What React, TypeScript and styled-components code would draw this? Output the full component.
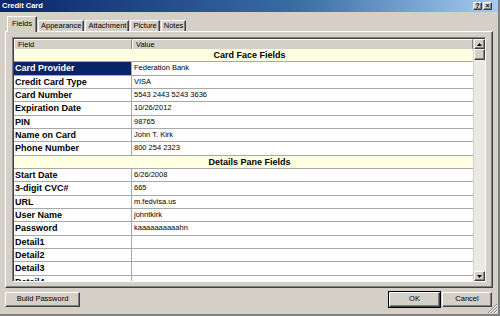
import React from "react";
import styled, { createGlobalStyle, css } from "styled-components";

const Global = createGlobalStyle`
  html, body { margin: 0; padding: 0; background: #d4d0c8; }
  body { font-family: "Liberation Sans", Arial, sans-serif; }
  * { box-sizing: border-box; }
`;

const ROW_H = 40 / 3;

const Window = styled.div`
  width: 500px;
  height: 316px;
  background: #d4d0c8;
  display: flex;
  flex-direction: column;
  border-right: 2px solid #808080;
  border-bottom: 2px solid #808080;
  position: relative;
  overflow: hidden;
`;

const TitleBar = styled.div`
  height: 12px;
  flex: none;
  display: flex;
  align-items: center;
  justify-content: space-between;
  background: linear-gradient(to right, #0a246a 0%, #3a6ea5 60%, #a6caf0 100%);
  padding: 0 6px 0 2px;
`;

const Title = styled.span`
  color: #fff;
  font-weight: bold;
  font-size: 7.5px;
  line-height: 12px;
`;

const TitleButtons = styled.div`
  display: flex;
  gap: 1px;
`;

const raised = css`
  border-top: 1px solid #fff;
  border-left: 1px solid #fff;
  border-right: 1px solid #404040;
  border-bottom: 1px solid #404040;
  box-shadow: inset -1px -1px 0 #808080;
`;

const CaptionButton = styled.div`
  width: 9px;
  height: 8px;
  background: #d4d0c8;
  ${raised};
  font-size: 7px;
  font-weight: bold;
  line-height: 6px;
  text-align: center;
  color: #000;
`;

const Body = styled.div`
  flex: 1;
  display: flex;
  flex-direction: column;
  padding: 0 5px 0 5px;
`;

const TabStrip = styled.div`
  height: 19px;
  flex: none;
  display: flex;
  align-items: flex-end;
  padding-left: 2px;
  position: relative;
  z-index: 1;
`;

const Tab = styled.div<{ $active?: boolean }>`
  font-size: 7.5px;
  color: #000;
  background: #d4d0c8;
  border-top: 1px solid #fff;
  border-left: 1px solid #fff;
  border-right: 1px solid #404040;
  box-shadow: inset -1px 0 0 #808080;
  ${(p) =>
    p.$active
      ? css`
          height: 16px;
          line-height: 13px;
          margin-bottom: -1px;
          padding: 0 4px;
        `
      : css`
          height: 11px;
          line-height: 10px;
          margin-left: 1px;
          padding: 0 2px;
        `}
`;

const TabPanel = styled.div`
  height: 257px;
  flex: none;
  border-top: 1px solid #fff;
  border-left: 1px solid #fff;
  border-right: 1px solid #404040;
  border-bottom: 1px solid #404040;
  box-shadow: inset -1px -1px 0 #808080;
  padding: 5px 6px 5px 6px;
  display: flex;
`;

const GridFrame = styled.div`
  flex: 1;
  display: flex;
  border-top: 1px solid #808080;
  border-left: 1px solid #808080;
  border-right: 1px solid #fff;
  border-bottom: 1px solid #fff;
  box-shadow: inset 1px 1px 0 #404040;
  padding: 1px 0 0 1px;
  overflow: hidden;
`;

const Grid = styled.div`
  flex: 1;
  background: #fff;
  overflow: hidden;
  display: flex;
  flex-direction: column;
`;

const HeaderRow = styled.div`
  height: 10px;
  flex: none;
  display: grid;
  grid-template-columns: 118px 1fr;
  background: #d4d0c8;
`;

const HeaderCell = styled.div`
  font-size: 7.5px;
  line-height: 9px;
  padding-left: 3px;
  border-top: 1px solid #fff;
  border-left: 1px solid #fff;
  border-right: 1px solid #808080;
  border-bottom: 1px solid #808080;
  color: #000;
`;

const SectionRow = styled.div`
  height: ${ROW_H}px;
  flex: none;
  background: #ffffe1;
  border-bottom: 1px solid #a8a8a8;
  font-size: 9px;
  font-weight: bold;
  text-align: center;
  padding-left: 12px;
  line-height: 12px;
  color: #000;
`;

const Row = styled.div`
  height: ${ROW_H}px;
  flex: none;
  display: grid;
  grid-template-columns: 118px 1fr;
  border-bottom: 1px solid #a8a8a8;
`;

const LabelCell = styled.div<{ $selected?: boolean }>`
  font-size: 9px;
  font-weight: bold;
  line-height: 12px;
  padding-left: 1px;
  border-right: 1px solid #a8a8a8;
  white-space: nowrap;
  overflow: hidden;
  color: ${(p) => (p.$selected ? "#fff" : "#000")};
  background: ${(p) => (p.$selected ? "#0a246a" : "transparent")};
`;

const ValueCell = styled.div`
  font-size: 7.5px;
  line-height: 11px;
  padding-left: 2px;
  color: #000;
  white-space: nowrap;
`;

const ScrollBar = styled.div`
  width: 12px;
  flex: none;
  display: flex;
  flex-direction: column;
  background: #ebe9e4;
  border-left: 1px solid #d4d0c8;
`;

const ScrollButton = styled.div`
  height: 10px;
  flex: none;
  background: #d4d0c8;
  ${raised};
  display: flex;
  align-items: center;
  justify-content: center;
`;

const Thumb = styled.div`
  height: 11px;
  flex: none;
  background: #d4d0c8;
  ${raised};
`;

const Track = styled.div`
  flex: 1;
`;

const Footer = styled.div`
  flex: 1;
  display: flex;
  align-items: flex-start;
  padding: 4px 1px 0 0;
  gap: 2px;
`;

const Button = styled.div<{ $default?: boolean; $w: number }>`
  width: ${(p) => p.$w}px;
  height: 15px;
  font-size: 7.5px;
  line-height: 12px;
  text-align: center;
  color: #000;
  background: #d4d0c8;
  border-top: 1px solid #fff;
  border-left: 1px solid #fff;
  border-right: 1px solid #404040;
  border-bottom: 1px solid #404040;
  box-shadow: inset -1px -1px 0 #808080;
  ${(p) =>
    p.$default &&
    css`
      outline: 1px solid #000;
      outline-offset: 0;
    `}
`;

const Spacer = styled.div`
  flex: 1;
`;

const Grip = styled.svg`
  position: absolute;
  right: 0;
  bottom: 0;
`;

const Arrow = ({ up }: { up?: boolean }) => (
  <svg width="5" height="3" viewBox="0 0 5 3">
    <path d={up ? "M2.5 0 L5 3 L0 3 Z" : "M0 0 L5 0 L2.5 3 Z"} fill="#000" />
  </svg>
);

const cardFace: [string, string][] = [
  ["Card Provider", "Federation Bank"],
  ["Credit Card Type", "VISA"],
  ["Card Number", "5543 2443 5243 3636"],
  ["Expiration Date", "10/26/2012"],
  ["PIN", "98765"],
  ["Name on Card", "John T. Kirk"],
  ["Phone Number", "800 254 2323"],
];

const details: [string, string][] = [
  ["Start Date", "6/26/2008"],
  ["3-digit CVC#", "665"],
  ["URL", "m.fedvisa.us"],
  ["User Name", "johntkirk"],
  ["Password", "kaaaaaaaaaahn"],
  ["Detail1", ""],
  ["Detail2", ""],
  ["Detail3", ""],
  ["Detail4", ""],
];

export default function App() {
  return (
    <>
      <Global />
      <Window>
        <TitleBar>
          <Title>Credit Card</Title>
          <TitleButtons>
            <CaptionButton>?</CaptionButton>
            <CaptionButton>×</CaptionButton>
          </TitleButtons>
        </TitleBar>
        <Body>
          <TabStrip>
            <Tab $active>Fields</Tab>
            <Tab>Appearance</Tab>
            <Tab>Attachment</Tab>
            <Tab>Picture</Tab>
            <Tab>Notes</Tab>
          </TabStrip>
          <TabPanel>
            <GridFrame>
              <Grid>
                <HeaderRow>
                  <HeaderCell>Field</HeaderCell>
                  <HeaderCell>Value</HeaderCell>
                </HeaderRow>
                <SectionRow>Card Face Fields</SectionRow>
                {cardFace.map(([k, v], i) => (
                  <Row key={k}>
                    <LabelCell $selected={i === 0}>{k}</LabelCell>
                    <ValueCell>{v}</ValueCell>
                  </Row>
                ))}
                <SectionRow>Details Pane Fields</SectionRow>
                {details.map(([k, v]) => (
                  <Row key={k}>
                    <LabelCell>{k}</LabelCell>
                    <ValueCell>{v}</ValueCell>
                  </Row>
                ))}
              </Grid>
              <ScrollBar>
                <ScrollButton>
                  <Arrow up />
                </ScrollButton>
                <Thumb />
                <Track />
                <ScrollButton>
                  <Arrow />
                </ScrollButton>
              </ScrollBar>
            </GridFrame>
          </TabPanel>
          <Footer>
            <Button $w={75}>Build Password</Button>
            <Spacer />
            <Button $w={51} $default>
              OK
            </Button>
            <Button $w={50}>Cancel</Button>
          </Footer>
        </Body>
        <Grip width="11" height="11" viewBox="0 0 11 11">
          <path d="M10 1 L1 10 M10 4 L4 10 M10 7 L7 10" stroke="#808080" strokeWidth="1" />
          <path d="M10 2 L2 10 M10 5 L5 10 M10 8 L8 10" stroke="#fff" strokeWidth="1" />
        </Grip>
      </Window>
    </>
  );
}
